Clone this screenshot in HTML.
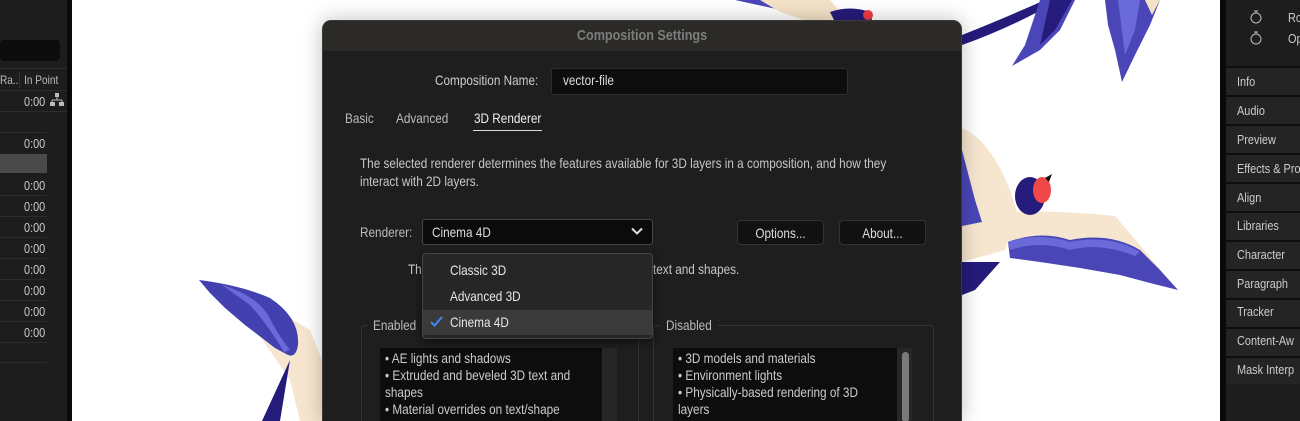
<!DOCTYPE html>
<html><head><meta charset="utf-8"><style>
*{margin:0;padding:0;box-sizing:border-box}
html,body{width:1300px;height:421px;overflow:hidden}
body{background:#fff;font-family:"Liberation Sans",sans-serif;position:relative;font-size:12px;color:#d0d0d0}
.a{position:absolute}
.t{position:absolute;white-space:nowrap;transform:scaleX(.84);transform-origin:0 0}
.tc{transform-origin:50% 0}
</style></head><body>
<!-- left panel -->
<div class="a" style="left:0;top:0;width:67px;height:421px;background:#1d1d1d"></div>
<div class="a" style="left:67px;top:0;width:5px;height:421px;background:#0a0a0a"></div>
<div class="a" style="left:0;top:40px;width:60px;height:21px;background:#0c0c0c;border-radius:4px"></div>
<div class="a" style="left:0;top:68px;width:67px;height:1px;background:#2c2c2c"></div>
<div class="t" style="left:0;top:73px;font-size:12px;color:#bbb">Ra..&nbsp; In Point</div>
<div class="a" style="left:19px;top:72px;width:1px;height:16px;background:#333"></div>
<div class="a" style="left:0;top:90px;width:67px;height:1px;background:#2c2c2c"></div>
<div class="t" style="left:24px;top:94px;font-size:13px;color:#ccc">0:00</div>
<svg class="a" style="left:50px;top:93px" width="14" height="14"><rect x="5" y="0" width="4" height="4" fill="#bbb"/><path d="M7 4v3M2 7h10M2 7v2M12 7v2" stroke="#bbb"/><rect x="0" y="9" width="5" height="4" fill="#bbb"/><rect x="9" y="9" width="5" height="4" fill="#bbb"/></svg>
<div class="a" style="left:0;top:111px;width:67px;height:1px;background:#2c2c2c"></div>
<div class="a" style="left:0;top:132px;width:47px;height:1px;background:#2c2c2c"></div>
<div class="t" style="left:24px;top:136px;font-size:13px;color:#ccc">0:00</div>
<div class="a" style="left:0;top:154px;width:47px;height:19px;background:#4a4a4a"></div>
<div class="t" style="left:24px;top:178px;font-size:13px;color:#ccc">0:00</div>
<div class="t" style="left:24px;top:199px;font-size:13px;color:#ccc">0:00</div>
<div class="t" style="left:24px;top:220px;font-size:13px;color:#ccc">0:00</div>
<div class="t" style="left:24px;top:241px;font-size:13px;color:#ccc">0:00</div>
<div class="t" style="left:24px;top:262px;font-size:13px;color:#ccc">0:00</div>
<div class="t" style="left:24px;top:283px;font-size:13px;color:#ccc">0:00</div>
<div class="t" style="left:24px;top:304px;font-size:13px;color:#ccc">0:00</div>
<div class="t" style="left:24px;top:325px;font-size:13px;color:#ccc">0:00</div>
<div class="a" style="left:0;top:195px;width:47px;height:1px;background:#2c2c2c"></div>
<div class="a" style="left:0;top:216px;width:47px;height:1px;background:#2c2c2c"></div>
<div class="a" style="left:0;top:237px;width:47px;height:1px;background:#2c2c2c"></div>
<div class="a" style="left:0;top:258px;width:47px;height:1px;background:#2c2c2c"></div>
<div class="a" style="left:0;top:279px;width:47px;height:1px;background:#2c2c2c"></div>
<div class="a" style="left:0;top:300px;width:47px;height:1px;background:#2c2c2c"></div>
<div class="a" style="left:0;top:321px;width:47px;height:1px;background:#2c2c2c"></div>
<div class="a" style="left:0;top:342px;width:47px;height:1px;background:#2c2c2c"></div>
<div class="a" style="left:0;top:362px;width:47px;height:1px;background:#2c2c2c"></div>

<!-- birds (page coords) -->
<svg class="a" style="left:0;top:0" width="1220" height="421">
<!-- top-left bird -->
<path d="M735 0 L800 0 L790 12 Z" fill="#4a46b8"/>
<path d="M760 0 L830 0 L845 18 L810 22 L780 12 Z" fill="#f3e2c8"/>
<path d="M830 12 Q850 5 870 12 L872 20 L835 22 Z" fill="#251b7a"/>
<circle cx="868" cy="15" r="5" fill="#ee3b42"/>
<!-- top right swoop / wings -->
<path d="M962 35 Q1000 20 1045 0 L1060 0 Q1010 28 962 45 Z" fill="#251b7a"/>
<path d="M1040 0 L1075 0 L1060 30 L1040 50 L1012 66 L1025 45 Z" fill="#4a46b8"/>
<path d="M1050 0 L1072 0 L1055 30 L1040 45 Z" fill="#251b7a"/>
<path d="M1105 0 L1160 0 L1150 25 L1135 55 L1122 82 L1115 50 L1108 25 Z" fill="#4a46b8"/>
<path d="M1118 0 L1140 0 L1135 30 L1125 55 Z" fill="#6a6ad8"/>
<path d="M1145 0 L1160 0 L1152 15 Z" fill="#f3e2c8"/>
<!-- right bird -->
<path d="M962 128 Q990 140 1010 190 L1018 215 L1005 250 L962 262 Z" fill="#f6e6d0"/>
<path d="M962 150 L975 200 L982 222 L962 226Z" fill="#4a46b8"/>
<path d="M1005 212 Q1060 210 1115 216 L1140 245 L1175 288 L1120 270 L1050 262 L1010 258 Z" fill="#f6e6d0"/>
<path d="M1008 242 Q1040 230 1070 240 Q1110 232 1140 250 L1160 270 L1178 290 L1150 283 L1120 275 L1080 268 L1040 262 L1010 258 Z" fill="#4a46b8"/>
<path d="M1008 242 Q1040 232 1070 242 Q1110 234 1140 252 L1135 256 Q1100 242 1070 250 Q1040 240 1010 250Z" fill="#6a6ad8"/>
<path d="M962 262 L1000 262 L975 290 L962 295Z" fill="#251b7a"/>
<ellipse cx="1030" cy="196" rx="15" ry="19" fill="#251b7a"/>
<ellipse cx="1042" cy="190" rx="9" ry="13" fill="#f04848"/>
<path d="M1045 178 L1052 174 L1049 182Z" fill="#111"/>
<!-- bottom-left wing -->
<path d="M235 300 Q280 310 310 330 L322 360 L322 421 L300 421 L290 380 Z" fill="#f6e6d0"/>
<path d="M199 280 Q240 285 270 298 Q300 318 298 345 Q296 358 288 355 L275 348 L262 338 L245 325 L225 308 L210 293Z" fill="#4340b0"/>
<path d="M222 285 Q255 295 268 315 Q278 335 290 350 L284 352 Q268 325 250 305 Z" fill="#6a6ad8"/>
<path d="M290 360 L262 421 L280 421Z" fill="#251b7a"/>
</svg>

<!-- canvas right border -->
<div class="a" style="left:1220px;top:0;width:6px;height:421px;background:#0a0a0a"></div>
<!-- right panel -->
<div class="a" style="left:1226px;top:0;width:74px;height:421px;background:#1d1d1d"></div>
<svg class="a" style="left:1248px;top:8px" width="16" height="40"><circle cx="8" cy="10" r="5" fill="none" stroke="#bbb"/><path d="M6 3h4M8 3v2" stroke="#bbb"/><circle cx="8" cy="31" r="5" fill="none" stroke="#bbb"/><path d="M6 24h4M8 24v2" stroke="#bbb"/></svg>
<div class="t" style="left:1288px;top:10px;font-size:13px;color:#ccc">Ro</div>
<div class="t" style="left:1288px;top:31px;font-size:13px;color:#ccc">Op</div>
<div class="a" style="left:1226px;top:66px;width:74px;height:2px;background:#0e0e0e"></div>
<div class="a" style="left:1226px;top:68px;width:74px;height:316px;background:repeating-linear-gradient(#242424 0 27px,#0e0e0e 27px 29px)"></div>
<div class="t" style="left:1237px;top:74px;font-size:13px;color:#ccc">Info</div>
<div class="t" style="left:1237px;top:103px;font-size:13px;color:#ccc">Audio</div>
<div class="t" style="left:1237px;top:132px;font-size:13px;color:#ccc">Preview</div>
<div class="t" style="left:1237px;top:161px;font-size:13px;color:#ccc">Effects &amp; Pro</div>
<div class="t" style="left:1237px;top:190px;font-size:13px;color:#ccc">Align</div>
<div class="t" style="left:1237px;top:218px;font-size:13px;color:#ccc">Libraries</div>
<div class="t" style="left:1237px;top:247px;font-size:13px;color:#ccc">Character</div>
<div class="t" style="left:1237px;top:276px;font-size:13px;color:#ccc">Paragraph</div>
<div class="t" style="left:1237px;top:304px;font-size:13px;color:#ccc">Tracker</div>
<div class="t" style="left:1237px;top:333px;font-size:13px;color:#ccc">Content-Aw</div>
<div class="t" style="left:1237px;top:362px;font-size:13px;color:#ccc">Mask Interp</div>

<!-- dialog -->
<div class="a" style="left:322px;top:20px;width:640px;height:401px;background:#1e1e1e;border-radius:9px 9px 0 0;border:1px solid #3a3a3a;border-bottom:0;box-shadow:0 0 20px rgba(0,0,0,.25);overflow:hidden">
 <div class="a" style="left:0;top:0;width:640px;height:30px;background:#2b2a27"></div>
</div>
<div class="t tc" style="left:322px;width:640px;text-align:center;top:27px;font-size:15px;font-weight:bold;color:#7d7d7d">Composition Settings</div>
<div class="t" style="left:435px;top:72px;font-size:14px;color:#ccc">Composition Name:</div>
<div class="a" style="left:551px;top:68px;width:297px;height:27px;background:#0d0d0d;border:1px solid #2e2e2e;border-radius:3px"></div>
<div class="t" style="left:563px;top:72px;font-size:14px;color:#ddd">vector-file</div>
<div class="t" style="left:345px;top:110px;font-size:14px;color:#bbb">Basic</div>
<div class="t" style="left:396px;top:110px;font-size:14px;color:#bbb">Advanced</div>
<div class="t" style="left:474px;top:110px;font-size:14px;color:#eee">3D Renderer</div>
<div class="a" style="left:473px;top:130px;width:69px;height:1px;background:#ddd"></div>
<div class="t" style="left:360px;top:154px;font-size:14px;color:#c6c6c6;line-height:18px">The selected renderer determines the features available for 3D layers in a composition, and how they<br>interact with 2D layers.</div>
<div class="t" style="left:360px;top:224px;font-size:14px;color:#bbb">Renderer:</div>
<div class="a" style="left:422px;top:219px;width:231px;height:26px;background:#0b0b0b;border:1px solid #444;border-radius:3px"></div>
<div class="t" style="left:432px;top:224px;font-size:14px;color:#ddd">Cinema 4D</div>
<svg class="a" style="left:631px;top:227px" width="12" height="9"><path d="M1 1.5 L6 6.5 L11 1.5" fill="none" stroke="#ddd" stroke-width="2"/></svg>
<div class="a" style="left:737px;top:220px;width:87px;height:25px;background:#111;border:1px solid #333;border-radius:4px"></div>
<div class="t tc" style="left:737px;width:87px;text-align:center;top:225px;font-size:14px;color:#ddd">Options...</div>
<div class="a" style="left:839px;top:220px;width:87px;height:25px;background:#111;border:1px solid #333;border-radius:4px"></div>
<div class="t tc" style="left:839px;width:87px;text-align:center;top:225px;font-size:14px;color:#ddd">About...</div>
<div class="t" style="left:408px;top:261px;font-size:14px;color:#c6c6c6">Th</div>
<div class="t" style="left:653px;top:261px;font-size:14px;color:#c6c6c6">text and shapes.</div>
<!-- group boxes -->
<div class="a" style="left:361px;top:325px;width:278px;height:110px;border:1px solid #333;border-radius:4px"></div>
<div class="a" style="left:368px;top:318px;width:54px;height:14px;background:#1e1e1e"></div>
<div class="t" style="left:373px;top:317px;font-size:14px;color:#bbb">Enabled</div>
<div class="a" style="left:653px;top:325px;width:281px;height:110px;border:1px solid #333;border-radius:4px"></div>
<div class="a" style="left:660px;top:318px;width:58px;height:14px;background:#1e1e1e"></div>
<div class="t" style="left:666px;top:317px;font-size:14px;color:#bbb">Disabled</div>
<div class="a" style="left:380px;top:348px;width:222px;height:80px;background:#0d0d0d"></div>
<div class="a" style="left:602px;top:348px;width:15px;height:80px;background:#262626"></div>
<div class="t" style="left:385px;top:350px;font-size:14px;color:#ccc;line-height:17px">• AE lights and shadows<br>• Extruded and beveled 3D text and<br>shapes<br>• Material overrides on text/shape</div>
<div class="a" style="left:673px;top:348px;width:224px;height:80px;background:#0d0d0d"></div>
<div class="a" style="left:897px;top:348px;width:15px;height:80px;background:#262626"></div>
<div class="a" style="left:902px;top:352px;width:7px;height:70px;background:#7a7a7a;border-radius:4px"></div>
<div class="t" style="left:678px;top:350px;font-size:14px;color:#ccc;line-height:17px">• 3D models and materials<br>• Environment lights<br>• Physically-based rendering of 3D<br>layers</div>
<!-- dropdown menu -->
<div class="a" style="left:422px;top:253px;width:231px;height:86px;background:#262626;border:1px solid #454545;border-radius:4px;box-shadow:0 3px 8px rgba(0,0,0,.5)"></div>
<div class="a" style="left:423px;top:310px;width:229px;height:25px;background:#3a3a3a"></div>
<div class="t" style="left:450px;top:262px;font-size:14px;color:#e6e6e6">Classic 3D</div>
<div class="t" style="left:450px;top:288px;font-size:14px;color:#e6e6e6">Advanced 3D</div>
<svg class="a" style="left:430px;top:316px" width="13" height="11"><path d="M1 6 L4.5 9.5 L12 1" fill="none" stroke="#3d8ef0" stroke-width="2"/></svg>
<div class="t" style="left:450px;top:314px;font-size:14px;color:#e6e6e6">Cinema 4D</div>
</body></html>
